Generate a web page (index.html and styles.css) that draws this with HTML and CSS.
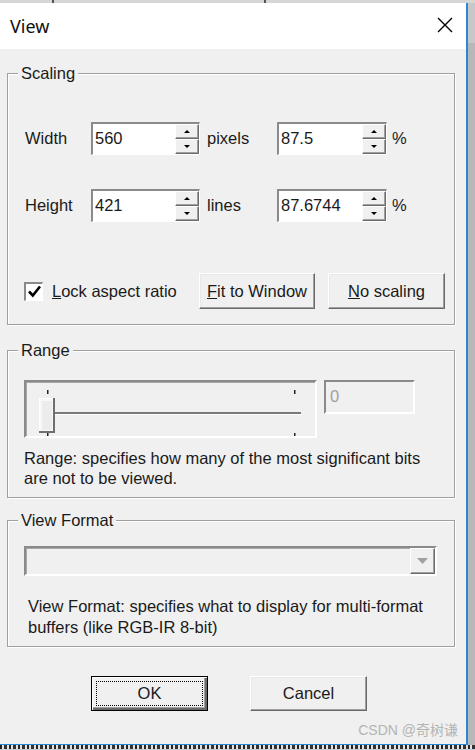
FILE: index.html
```html
<!DOCTYPE html>
<html>
<head>
<meta charset="utf-8">
<link rel="stylesheet" href="styles.css">
</head>
<body>
<div class="topstrip"></div>
<div class="main">
  <div class="window">
    <div class="titlebar">
      <span class="title">View</span>
      <svg class="close" width="16" height="16" viewBox="0 0 16 16"><path d="M1 1 L15 15 M15 1 L1 15" stroke="#000" stroke-width="1.4" fill="none"/></svg>
    </div>
    <div class="client">
      <fieldset class="group g-scaling">
        <legend>Scaling</legend>
        <div class="scaling-body">
          <div class="srow">
            <span class="lbl">Width</span>
            <div class="spin"><span class="val">560</span><div class="spin-btns"><span class="sb up"></span><span class="sb down"></span></div></div>
            <span class="unit">pixels</span>
            <div class="spin spin2"><span class="val">87.5</span><div class="spin-btns"><span class="sb up"></span><span class="sb down"></span></div></div>
            <span class="pct">%</span>
          </div>
          <div class="srow srow2">
            <span class="lbl">Height</span>
            <div class="spin"><span class="val">421</span><div class="spin-btns"><span class="sb up"></span><span class="sb down"></span></div></div>
            <span class="unit">lines</span>
            <div class="spin spin2"><span class="val">87.6744</span><div class="spin-btns"><span class="sb up"></span><span class="sb down"></span></div></div>
            <span class="pct">%</span>
          </div>
          <div class="lockrow">
            <span class="check"><svg width="15" height="15" viewBox="0 0 15 15"><path d="M2 7.5 L5.8 11.5 L13 2.5" stroke="#000" stroke-width="2.6" fill="none"/></svg></span>
            <span class="locklbl"><u>L</u>ock aspect ratio</span>
            <button class="btn fit"><u>F</u>it to Window</button>
            <button class="btn noscale"><u>N</u>o scaling</button>
          </div>
        </div>
      </fieldset>

      <fieldset class="group g-range">
        <legend>Range</legend>
        <div class="range-body">
          <div class="range-top">
            <div class="slider">
              <svg width="289" height="54" viewBox="0 0 289 54">
                <rect x="21" y="8" width="1.5" height="4" fill="#222"/>
                <rect x="268" y="8" width="1.5" height="4" fill="#222"/>
                <rect x="21" y="51" width="1.5" height="3" fill="#222"/>
                <rect x="268" y="51" width="1.5" height="3" fill="#222"/>
                <rect x="29" y="30" width="246" height="2" fill="#7a7a7a"/>
                <rect x="29" y="32" width="246" height="1" fill="#fff"/>
                <rect x="13" y="16" width="16" height="35" fill="#f7f7f7"/>
                <rect x="13" y="16" width="16" height="1" fill="#fff"/>
                <rect x="13" y="16" width="1" height="35" fill="#fff"/>
                <rect x="27" y="16" width="2" height="35" fill="#6e6e6e"/>
                <rect x="13" y="49" width="16" height="2" fill="#6e6e6e"/>
                <rect x="16" y="19" width="10" height="29" fill="#ececec"/>
              </svg>
            </div>
            <div class="numbox">0</div>
          </div>
          <p class="desc">Range: specifies how many of the most significant bits<br>are not to be viewed.</p>
        </div>
      </fieldset>

      <fieldset class="group g-format">
        <legend>View Format</legend>
        <div class="format-body">
          <div class="combo">
            <span class="combo-btn"><svg width="11" height="6" viewBox="0 0 11 6"><path d="M0 0 H11 L5.5 6 Z" fill="#a0a0a0"/></svg></span>
          </div>
          <p class="desc desc2">View Format: specifies what to display for multi-format<br>buffers (like RGB-IR 8-bit)</p>
        </div>
      </fieldset>

      <div class="actions">
        <button class="btn ok"><span class="focus">OK</span></button>
        <button class="btn cancel">Cancel</button>
      </div>
    </div>
    <div class="watermark">CSDN @奇树谦</div>
  </div>
  <div class="rightstrip"></div>
</div>
<div class="bottomstrip"></div>
</body>
</html>
```

FILE: styles.css
```css
html, body {
  margin: 0;
  padding: 0;
}
body {
  width: 475px;
  height: 750px;
  overflow: hidden;
  background: #cdcdcd;
  font-family: "Liberation Sans", Arial, sans-serif;
  font-size: 16.5px;
  color: #1a1a1a;
}
.topstrip {
  height: 3px;
  background: linear-gradient(90deg, #d6d6d6 0 52px, #555 52px 54px, #d6d6d6 54px 264px, #555 264px 266px, #d6d6d6 266px);
}
.main {
  display: flex;
}
.window {
  position: relative;
  width: 466px;
  background: #f0f0f0;
  border-right: 2px solid #2b87d3;
  border-bottom: 1px solid #2b87d3;
}
.titlebar {
  height: 46px;
  background: #fff;
  display: flex;
  align-items: center;
  justify-content: space-between;
  padding: 0 13px 0 10px;
}
.title {
  font-family: "Noto Sans", "Open Sans", sans-serif;
  font-size: 18px;
  color: #111;
}
.close {
  display: block;
  margin-top: -2px;
}
.client {
  height: 695px;
  box-sizing: border-box;
  padding: 14px 11px 0 7px;
}
.group {
  margin: 0;
  padding: 0;
  min-width: 0;
  border: 1px solid #a0a0a0;
  box-shadow: inset 1px 1px 0 #fff, 1px 1px 0 #fff;
}
.group legend {
  margin-left: 10px;
  padding: 0 3px;
  line-height: 20px;
  background: #f0f0f0;
}
.g-range {
  margin-top: 15px;
}
.g-format {
  margin-top: 12px;
}

/* Scaling */
.scaling-body {
  padding: 39px 9px 15px 17px;
}
.srow {
  display: flex;
  align-items: center;
  height: 33px;
}
.srow2 {
  margin-top: 34px;
}
.lbl {
  width: 66px;
  flex: none;
}
.spin {
  display: flex;
  width: 109px;
  height: 33px;
  box-sizing: border-box;
  border-style: solid;
  border-width: 2px 1px 1px 2px;
  border-color: #8a8a8a #fff #fff #8a8a8a;
  background: #fff;
  flex: none;
}
.spin2 {
  width: 110px;
}
.val {
  flex: 1;
  padding-left: 2px;
  line-height: 28px;
}
.spin-btns {
  width: 24px;
  display: flex;
  flex-direction: column;
}
.sb {
  flex: 1;
  display: flex;
  align-items: center;
  justify-content: center;
  background: #f0f0f0;
  border: 1px solid;
  border-color: #fff #6b6b6b #6b6b6b #fff;
  box-shadow: inset -1px -1px 0 #a0a0a0;
}
.sb::after {
  content: "";
  border-left: 3px solid transparent;
  border-right: 3px solid transparent;
}
.up::after {
  border-bottom: 3px solid #000;
}
.down::after {
  border-top: 3px solid #000;
}
.unit {
  width: 77px;
  box-sizing: border-box;
  padding-left: 7px;
  flex: none;
}
.pct {
  padding-left: 5px;
}
.lockrow {
  display: flex;
  align-items: center;
  height: 36px;
  margin-top: 51px;
  margin-left: -1px;
}
.check {
  width: 19px;
  height: 19px;
  box-sizing: border-box;
  border-style: solid;
  border-width: 2px 1px 1px 2px;
  border-color: #8a8a8a #fff #fff #8a8a8a;
  background: #fff;
  display: flex;
  align-items: center;
  justify-content: center;
  flex: none;
}
.check svg {
  display: block;
}
.locklbl {
  width: 156px;
  box-sizing: border-box;
  padding-left: 9px;
  flex: none;
}
.btn {
  font: inherit;
  color: #1a1a1a;
  background: #f0f0f0;
  border: 1px solid;
  border-color: #fff #696969 #696969 #fff;
  box-shadow: inset -1px -1px 0 #a0a0a0, inset 1px 1px 0 #e8e8e8;
  padding: 0;
  height: 36px;
  flex: none;
}
.fit {
  width: 116px;
}
.noscale {
  width: 117px;
  margin-left: 13px;
}

/* Range */
.range-body {
  padding: 20px 9px 9px 16px;
}
.range-top {
  display: flex;
  align-items: flex-start;
  gap: 7px;
}
.slider {
  width: 293px;
  height: 58px;
  box-sizing: border-box;
  border: 2px solid;
  border-color: #8a8a8a #fff #fff #8a8a8a;
  box-shadow: inset 1px 1px 0 #a8a8a8;
}
.slider svg {
  display: block;
}
.numbox {
  width: 91px;
  height: 34px;
  box-sizing: border-box;
  border: 2px solid;
  border-color: #8a8a8a #fff #fff #8a8a8a;
  color: #a0a0a0;
  padding-left: 4px;
  line-height: 28px;
}
.desc {
  margin: 10px 0 0;
  line-height: 20px;
}

/* View format */
.format-body {
  padding: 16px 9px 8px 16px;
}
.combo {
  width: 413px;
  height: 30px;
  box-sizing: border-box;
  border: 2px solid;
  border-color: #8a8a8a #fff #fff #8a8a8a;
  box-shadow: inset 1px 1px 0 #a8a8a8;
  display: flex;
  justify-content: flex-end;
}
.combo-btn {
  width: 25px;
  height: 26px;
  box-sizing: border-box;
  border: 1px solid;
  border-color: #fff #6b6b6b #6b6b6b #fff;
  box-shadow: inset -1px -1px 0 #a0a0a0;
  display: flex;
  align-items: center;
  justify-content: center;
}
.combo-btn svg {
  display: block;
}
.desc2 {
  margin-top: 20px;
  padding-left: 4px;
  line-height: 21px;
}

/* Actions */
.actions {
  display: flex;
  margin: 29px 0 0 84px;
  gap: 42px;
}
.ok, .cancel {
  width: 117px;
  height: 35px;
}
.ok {
  border: 1px solid #000;
  box-shadow: inset 1px 1px 0 #fff, inset -2px -2px 0 #696969, inset -3px -3px 0 #a0a0a0;
  padding: 4px;
}
.focus {
  display: flex;
  align-items: center;
  justify-content: center;
  height: 100%;
  box-sizing: border-box;
  border: 1px dotted #000;
}
.watermark {
  position: absolute;
  right: 8px;
  bottom: 5px;
  font-family: "Liberation Sans", "Noto Sans CJK SC", sans-serif;
  font-size: 14px;
  color: #b4b4b4;
}
.rightstrip {
  flex: 1;
  background: linear-gradient(180deg, #c8c8c8 0 40px, #b8b8b8 40px);
}
.bottomstrip {
  height: 4px;
  background: repeating-linear-gradient(90deg, #222 0 2px, #e4e4e4 2px 4px, #333 4px 7px, #e4e4e4 7px 9px);
}
```
